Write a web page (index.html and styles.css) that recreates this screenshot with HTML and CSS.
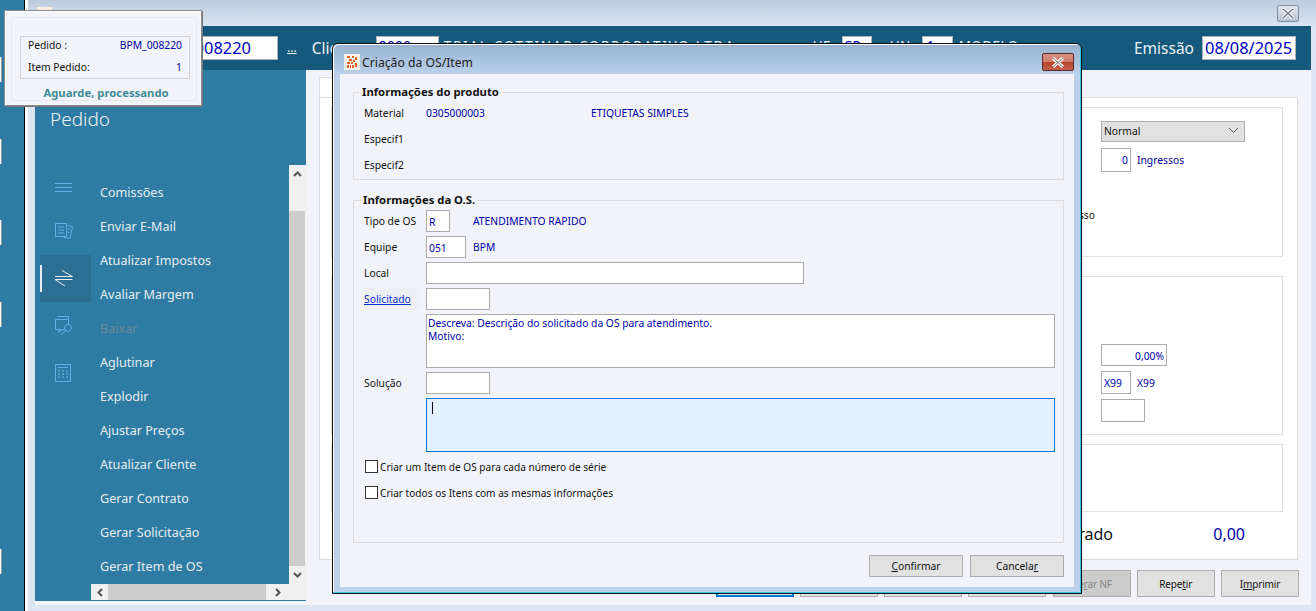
FILE: index.html
```html
<!DOCTYPE html>
<html lang="pt-BR">
<head>
<meta charset="utf-8">
<title>Criação da OS/Item</title>
<link rel="stylesheet" href="styles.css">
</head>
<body>
<div class="desk">
  <div class="strip"><i class="bit"></i><i class="bit"></i><i class="bit"></i><i class="bit"></i><i class="bit bit-last"></i></div>
  <div class="win">
    <div class="wintitle">
      <span class="winicon"></span>
      <span class="winclose"><svg width="14" height="11" viewBox="0 0 14 11"><path d="M2 1l10 9M12 1L2 10" fill="none" stroke="#fff" stroke-width="3.4"/><path d="M2 1l10 9M12 1L2 10" fill="none" stroke="#6d7784" stroke-width="1.4"/></svg></span>
    </div>
    <div class="client">
      <div class="hbar">
        <div class="hf hf-num">008220</div>
        <span class="hdots">...</span>
        <span class="hl hl-cli">Cliente</span>
        <div class="hf hf-top hf-cli">8000</div>
        <span class="hclip hclip-name">TRIAL COTTINAR CORPORATIVO LTDA</span>
        <span class="hclip hl-uf">UF</span>
        <div class="hf hf-top hf-uf">SP</div>
        <span class="hclip hl-un">UN</span>
        <div class="hf hf-top hf-un">1</div>
        <span class="hclip hclip-mod">MODELO</span>
        <span class="hl hl-em">Emissão</span>
        <div class="hf hf-em">08/08/2025</div>
      </div>
      <div class="cbody">
        <aside class="side">
          <div class="side-title">Pedido</div>
          <div class="side-body">
            <div class="rail">
              <svg class="ic ic1" width="18" height="10" viewBox="0 0 18 10"><path d="M0 .5h17M0 4.5h17M0 8.5h17" stroke="#62b0e6" fill="none"/></svg>
              <svg class="ic ic2" width="18" height="18" viewBox="0 0 18 18" fill="none" stroke="#62b0e6"><path d="M.5 1.5h11v13H.5zM11.5 3.5l6 1-2.500 12-6-1"/><path d="M3 5h6M3 8h6M3 11h6M13 7l2 .5M12.500 10l2 .5" stroke-width="1"/></svg>
              <div class="rail-sel"><svg width="18" height="17" viewBox="0 0 18 17" fill="none" stroke="#e9eef2"><path d="M0 6.500h17.500L7 .5M17.500 9.500H0L10 16"/></svg></div>
              <svg class="ic ic4" width="18" height="20" viewBox="0 0 18 20" fill="none" stroke="#62b0e6"><path d="M2.500.5h11v3M.5 3.500h13v10h-13z"/><circle cx="13" cy="12" r="3.500" fill="#2e7ca3"/><path d="M10.500 14.500L6 19M4 13.500v3l3-3"/></svg>
              <svg class="ic ic5" width="16" height="18" viewBox="0 0 16 18" fill="none" stroke="#62b0e6"><path d="M.5.500h15v17H.5zM3 3.500h10"/><path d="M3 7h10M3 10h10M3 13h10" stroke-dasharray="2 2" stroke="#5aa3d6" stroke-width="1.500"/></svg>
            </div>
            <ul class="menu">
              <li>Comissões</li>
              <li>Enviar E-Mail</li>
              <li>Atualizar Impostos</li>
              <li>Avaliar Margem</li>
              <li class="off">Baixar</li>
              <li>Aglutinar</li>
              <li>Explodir</li>
              <li>Ajustar Preços</li>
              <li>Atualizar Cliente</li>
              <li>Gerar Contrato</li>
              <li>Gerar Solicitação</li>
              <li>Gerar Item de OS</li>
            </ul>
            <div class="vscroll">
              <span class="sb-btn sb-up"><svg width="9" height="6" viewBox="0 0 9 6"><path d="M1 5l3.500-3.500L8 5" fill="none" stroke="#555" stroke-width="2"/></svg></span>
              <span class="v-track"></span>
              <span class="sb-btn sb-dn"><svg width="9" height="6" viewBox="0 0 9 6"><path d="M1 1l3.500 3.500L8 1" fill="none" stroke="#555" stroke-width="2"/></svg></span>
            </div>
            <div class="hscroll">
              <span class="hs-btn"><svg width="6" height="9" viewBox="0 0 6 9"><path d="M5 1L1.500 4.500 5 8" fill="none" stroke="#555" stroke-width="2"/></svg></span>
              <span class="h-thumb"></span>
              <span class="hs-btn hs-end"><svg width="6" height="9" viewBox="0 0 6 9"><path d="M1 1l3.500 3.500L1 8" fill="none" stroke="#555" stroke-width="2"/></svg></span>
            </div>
          </div>
        </aside>
        <main class="main">
          <div class="tab"></div>
          <div class="panel">
            <section class="box box1">
              <div class="frow"><span></span><div class="combo"><span>Normal</span><svg width="11" height="7" viewBox="0 0 11 7"><path d="M1 1l4.500 4.500L10 1" fill="none" stroke="#555"/></svg></div></div>
              <div class="frow frow-ing"><span></span><div class="inl"><div class="fld f30 num">0</div><span class="val">Ingressos</span></div></div>
              <div class="frow frow-pro"><span class="lab-r">Processo</span></div>
            </section>
            <section class="box box2">
              <div class="frow"><span></span><div class="fld f66 num">0,00%</div></div>
              <div class="frow"><span></span><div class="inl"><div class="fld f30 tall">X99</div><span class="val">X99</span></div></div>
              <div class="frow"><span></span><div class="fld f44 tall"></div></div>
            </section>
            <section class="box box3"></section>
            <div class="totals"><span class="tot-l">Liberado</span><span class="tot-v">0,00</span></div>
          </div>
          <div class="actions">
            <button class="btn focus"></button><button class="btn"></button><button class="btn"></button><button class="btn"></button><button class="btn off">Ge<u>r</u>ar NF</button><button class="btn">Repe<u>t</u>ir</button><button class="btn">I<u>m</u>primir</button>
          </div>
        </main>
      </div>
    </div>
  </div>
</div>

<div class="popup">
  <div class="pop-in">
    <div class="pop-info">
      <div class="pop-row"><span>Pedido :</span><span class="val">BPM_008220</span></div>
      <div class="pop-row"><span>Item Pedido:</span><span class="val">1</span></div>
    </div>
    <div class="pop-msg">Aguarde, processando</div>
  </div>
</div>

<div class="dlg">
  <div class="dlg-title">
    <svg class="dlg-icon" width="16" height="16" viewBox="0 0 16 16"><rect width="16" height="16" fill="#fbf3ea"/><path d="M3 2h3v2H3zM8 2h2v2H8zM11 3h2v3h-2zM5 5h3v2H5zM9 6h2v2H9zM3 8h3v2H3zM7 8h2v2H7zM11 9h2v4h-2zM3 11h2v3H3zM6 11h1v3H6zM8 11h2v3H8z" fill="#e2622a"/></svg>
    <span>Criação da OS/Item</span>
    <span class="dlg-close"><svg width="14" height="11" viewBox="0 0 14 11"><path d="M2 1l10 9M12 1L2 10" fill="none" stroke="#fff" stroke-width="3.200"/><path d="M2 1l10 9M12 1L2 10" fill="none" stroke="#7c6a68" stroke-width="1"/></svg></span>
  </div>
  <div class="dlg-body">
    <fieldset class="grp grp1">
      <legend>Informações do produto</legend>
      <div class="prow"><span>Material</span><span class="val">0305000003</span><span class="val">ETIQUETAS SIMPLES</span></div>
      <div class="prow"><span>Especif1</span></div>
      <div class="prow"><span>Especif2</span></div>
    </fieldset>
    <fieldset class="grp grp2">
      <legend>Informações da O.S.</legend>
      <div class="osgrid">
        <span>Tipo de OS</span><div class="fld w24">R</div><span class="val">ATENDIMENTO RAPIDO</span>
        <span>Equipe</span><div class="fld w40">051</div><span class="val">BPM</span>
        <span>Local</span><div class="fld w378 span"></div>
        <a class="link" href="#">Solicitado</a><div class="fld w64 span"></div>
        <div class="area span col2">Descreva: Descrição do solicitado da OS para atendimento.<br>Motivo:</div>
        <span>Solução</span><div class="fld w64 span"></div>
        <div class="area focus span col2"><i class="caret"></i></div>
      </div>
      <label class="chk"><i class="box-c"></i>Criar um Item de OS para cada número de série</label>
      <label class="chk"><i class="box-c"></i>Criar todos os Itens com as mesmas informações</label>
    </fieldset>
    <div class="dlg-actions">
      <button class="btn dbtn"><u>C</u>onfirmar</button>
      <button class="btn dbtn">Cancela<u>r</u></button>
    </div>
  </div>
</div>
</body>
</html>
```
FILE: styles.css
```css
* { box-sizing: border-box; }
html, body { margin: 0; padding: 0; }
body {
  width: 1316px; height: 611px; overflow: hidden; position: relative;
  font-family: "Noto Sans", "Open Sans", sans-serif; font-size: 10.3px; color: #111;
}
.val { color: #0000a8; }

.desk { display: flex; height: 611px; }
.strip {
  width: 25px; flex: none; background: #2e7ca3; border-right: 1px solid #000;
  display: flex; flex-direction: column; gap: 56.5px; padding-top: 57px;
}
.bit { display: block; width: 2px; height: 25px; background: #fff; border-right: 1px solid #999; }
.bit-last { margin-top: 166px; }

.win {
  flex: 1; min-width: 0; display: flex; flex-direction: column;
  border-left: 3px solid #fff; background: #dce6f3;
}
.wintitle {
  height: 26px; flex: none; position: relative; display: flex; justify-content: space-between;
  padding: 5px 17px 0 9px; background: linear-gradient(#bccbdb, #d9e5f2);
}
.winicon { width: 15px; height: 5px; background: #fbeee2; margin-top: 2px; }
.winclose {
  width: 22px; height: 17px; border: 1px solid #7f8d9e; border-radius: 2px;
  background: linear-gradient(#dde5ee, #b6c3d1); display: flex; align-items: center; justify-content: center;
}
.client { flex: 1; min-height: 0; margin: 0 5px 6px 7px; display: flex; flex-direction: column; background: #f1f3f9; }

.hbar {
  height: 44px; flex: none; background: #155a7c; display: flex; align-items: flex-start;
  padding-top: 10px; color: #e9f0f5; font-size: 15.5px; line-height: 24px; white-space: nowrap;
}
.hf {
  height: 24px; background: #fff; border: 1px solid #a9b4bc; color: #0000c0; flex: none;
  font-size: 16.4px; line-height: 22px;
}
.hf-num { width: 118px; margin-left: 125px; text-align: right; padding-right: 26px; }
.hdots { margin-left: 9px; font-size: 12px; text-decoration: underline; }
.hl-cli { margin-left: 15px; width: 64px; }
.hf-top { font-size: 13.5px; letter-spacing: .5px; line-height: 12px; padding: 3px 0 0 2px; }
.hf-cli { width: 63px; }
.hclip { font-size: 13.5px; line-height: 10px; height: 2px; margin-top: 5px; letter-spacing: .4px; }
.hclip-name { width: 292px; margin-left: 5px; letter-spacing: 1.75px; }
.hl-uf { margin-left: 77px; width: 29px; }
.hf-uf { width: 30px; }
.hl-un { margin-left: 18px; width: 32px; }
.hf-un { width: 31px; padding-left: 4px; }
.hclip-mod { margin-left: 6px; }
.hl-em { margin-left: auto; margin-right: 8px; }
.hf-em { width: 94px; margin-right: 15px; padding-left: 2px; }

.cbody { flex: 1; min-height: 0; display: flex; }
.side { width: 271px; flex: none; height: 531px; background: #2e7ca3; display: flex; flex-direction: column; }
.side-title { height: 95px; flex: none; padding: 33px 0 0 15px; font-size: 19px; line-height: 32px; font-weight: 300; color: #e8eff4; }
.side-body { flex: 1; display: grid; grid-template-columns: 56px 198px 17px; grid-template-rows: 419px 16px 1px; }
.rail { grid-row: 1 / 4; display: flex; flex-direction: column; align-items: flex-start; padding-left: 20px; }
.ic { display: block; flex: none; }
.ic1 { margin-top: 18px; }
.ic2 { margin-top: 29px; }
.rail-sel {
  margin: 15px 0 0 -15px; width: 51px; height: 47px; background: #2c6f92; flex: none;
  position: relative; display: flex; align-items: center; padding-left: 15px;
}
.rail-sel::before { content: ""; position: absolute; left: 0; top: 10px; width: 2px; height: 27px; background: #e9eef2; }
.ic4 { margin-top: 14px; }
.ic5 { margin-top: 28px; }
.menu {
  list-style: none; margin: 0; padding: 11px 0 0 9px; grid-row: 1;
  font-size: 12.6px; color: #e6edf2;
}
.menu li { height: 34px; line-height: 34px; white-space: nowrap; }
.menu .off { color: #6c8798; }
.vscroll { grid-row: 1; display: flex; flex-direction: column; background: #f0f0f0; }
.sb-btn { display: flex; align-items: center; justify-content: center; flex: none; }
.sb-up { height: 46px; align-items: flex-start; padding-top: 6px; }
.sb-dn { height: 18px; }
.v-track { flex: 1; width: 16px; background: #cdcdcd; }
.hscroll { grid-column: 2 / 4; grid-row: 2; display: flex; background: #f0f0f0; }
.hs-btn { width: 17px; flex: none; display: flex; align-items: center; justify-content: center; }
.hs-end { width: 40px; padding-right: 17px; }
.h-thumb { width: 158px; background: #cdcdcd; }

.main { flex: 1; min-width: 0; display: flex; flex-direction: column; padding: 7px 13px 0 13px; }
.tab { width: 240px; height: 20px; background: #fff; border: 1px solid #ddd; border-bottom: 0; flex: none; }
.panel {
  width: 979px; height: 463px; flex: none; background: #fff; border: 1px solid #dcdcdc;
  padding: 9px 14px 0 11px; display: flex; flex-direction: column;
}
.box { border: 1px solid #e0e0e0; flex: none; padding-left: 689px; display: flex; flex-direction: column; }
.box1 { height: 150px; padding-top: 13px; }
.box2 { height: 159px; margin-top: 19px; padding-top: 67px; gap: 5px; }
.box3 { height: 68px; margin-top: 9px; }
.frow { display: grid; grid-template-columns: 80px auto; justify-content: start; align-items: center; }
.frow-ing { margin-top: 6px; }
.frow-pro { margin-top: 35px; height: 16px; }
.lab-r { text-align: right; padding-right: 6px; }
.combo {
  width: 144px; height: 21px; background: #e1e1e1; border: 1px solid #adadad; display: flex;
  align-items: center; justify-content: space-between; padding: 0 5px 2px 2px; color: #111;
}
.inl { display: flex; align-items: center; gap: 6px; }
.fld { height: 22px; background: #fff; border: 1px solid #ababab; line-height: 22px; padding: 0 2px; color: #0000a8; flex: none; white-space: nowrap; }
.f30 { width: 30px; height: 24px; }
.f66 { width: 66px; }
.f44 { width: 44px; }
.tall { height: 23px; }
.num { text-align: right; }
.totals { display: flex; margin-top: 10px; font-size: 16px; line-height: 24px; }
.tot-l { width: 782px; text-align: right; color: #111; }
.tot-v { width: 132px; text-align: right; color: #0000a8; }

.actions { display: flex; justify-content: flex-end; gap: 6.25px; width: 980px; margin-top: 10px; }
.btn {
  width: 78px; height: 27px; background: #e1e1e1; border: 1px solid #adadad; padding: 0;
  font: inherit; color: #111; flex: none;
}
.actions .btn { font-size: 10px; letter-spacing: -.15px; }
.btn.focus { border: 2px solid #0078d7; }
.btn.off { background: #ccc; color: #858585; }

.popup {
  position: absolute; left: 4px; top: 10px; width: 198px; height: 96px; background: #f2f4f9;
  border: 1px solid #8c8c8c; box-shadow: 1px 1px 0 #777, inset 0 0 0 1px #fff; padding: 6px 4px 6px 6px;
}
.pop-in { height: 84px; border: 1px solid #e8e9ee; padding: 18px 6px 0 8px; }
.pop-info { height: 43px; border: 1px solid #d2d2d2; padding: 0 7px; display: flex; flex-direction: column; gap: 6px; }
.pop-row { display: flex; justify-content: space-between; line-height: 16px; }
.pop-msg { text-align: center; font-weight: 700; color: #3f8c96; margin: 6px -8px 0 -6px; font-size: 11.3px; white-space: nowrap; }

.dlg {
  position: absolute; left: 332px; top: 43px; width: 750px; height: 551px;
  border: 1px solid #111; border-radius: 6px 6px 0 0; padding: 0 7px 6px 7px;
  background: linear-gradient(#98b2cf, #b9d1ea 30px);
  box-shadow: inset -1px -1px 0 #35c7e5, inset 1px 1px 0 #fff;
  display: flex; flex-direction: column;
}
.dlg-title { height: 30px; flex: none; display: flex; align-items: center; gap: 2px; padding: 6px 0 0 4px; font-size: 12.2px; color: #222; }
.dlg-icon { flex: none; }
.dlg-close {
  margin-left: auto; width: 32px; height: 18px; border: 1px solid #5b2a2a; border-radius: 2px;
  background: linear-gradient(#d98e80 0, #cf7c6b 48%, #b6432a 50%, #c4614e 100%);
  display: flex; align-items: center; justify-content: center;
}
.dlg-body { flex: 1; min-height: 0; background: #f1f3f9; padding: 11px 10px 0 13px; display: flex; flex-direction: column; }
.grp { margin: 0; padding: 0 10px; border: 1px solid #dcdcdc; min-width: 0; flex: none; }
.grp legend { padding: 0 2px; margin-left: -4px; font-weight: 700; font-size: 11.3px; line-height: 14px; color: #111; }
.grp1 { height: 95px; padding-top: 1px; }
.prow { height: 26px; display: grid; grid-template-columns: 62px 165px 1fr; align-items: center; }
.grp2 { height: 350px; margin-top: 13px; }
.grp2 legend { margin-left: -3px; }
.osgrid { display: grid; grid-template-columns: 62px 47px 1fr; grid-template-rows: 22px 22px 22px 22px 54px 22px 54px; row-gap: 4px; align-items: center; margin-top: 3px; }
.span { grid-column: 2 / 4; }
.col2 { grid-column: 2 / 4; }
.w24 { width: 24px; }
.w40 { width: 40px; }
.w64 { width: 64px; }
.w378 { width: 378px; }
.link { color: #0a2fd0; text-decoration: underline; background: #eeeff4; height: 22px; line-height: 22px; width: 56px; }
.area {
  height: 54px; width: 629px; background: #fff; border: 1px solid #ababab;
  padding: 2px 1px; line-height: 13px; color: #0000a8;
}
.area.focus { background: #e3f0fd; border-color: #0078d7; padding: 3px 5px; }
.caret { display: block; width: 1px; height: 12px; background: #111; }
.chk { display: flex; align-items: center; gap: 2px; height: 13px; margin-top: 13px; padding-left: 1px; font-size: 10.1px; }
.osgrid + .chk { margin-top: 8px; }
.box-c { width: 13px; height: 13px; border: 1px solid #333; background: #fff; flex: none; }
.dlg-actions { display: flex; justify-content: flex-end; gap: 7px; margin-top: 12px; }
.dbtn { width: 94px; height: 22px; }
```
